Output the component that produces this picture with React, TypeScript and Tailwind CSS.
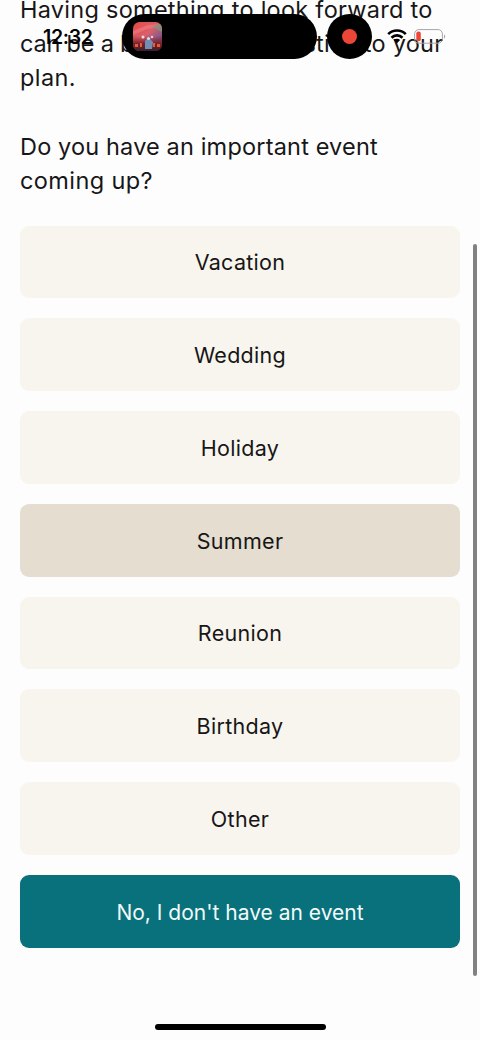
const events = ['Vacation', 'Wedding', 'Holiday', 'Summer', 'Reunion', 'Birthday', 'Other'];

function StatusBar() {
  return (
    <header className="absolute inset-x-0 top-0 flex h-[73px] items-center text-black">
      <div className="ml-[43px] w-[79px] font-['Inter',sans-serif] text-[19.5px] font-semibold leading-6 tracking-[-0.3px]">
        12:32
      </div>
      <div className="flex h-[45px] w-[195px] items-center rounded-full bg-black pl-[11px]">
        <svg className="h-[29px] w-[29px]" viewBox="0 0 29 29">
          <defs>
            <linearGradient id="sky" x1="0" y1="0" x2="1" y2="1">
              <stop offset="0" stopColor="#e5493f" />
              <stop offset=".45" stopColor="#d9606d" />
              <stop offset=".7" stopColor="#8c5a86" />
              <stop offset="1" stopColor="#552844" />
            </linearGradient>
            <linearGradient id="floor" x1="0" y1="0" x2="0" y2="1">
              <stop offset="0" stopColor="#7b2333" stopOpacity="0" />
              <stop offset=".5" stopColor="#81202a" />
              <stop offset="1" stopColor="#38202d" />
            </linearGradient>
            <filter id="glow"><feGaussianBlur stdDeviation=".7" /></filter>
            <clipPath id="cover"><rect width="29" height="29" rx="6.5" /></clipPath>
          </defs>
          <g clipPath="url(#cover)">
            <rect width="29" height="29" fill="url(#sky)" />
            <rect y="14" width="29" height="15" fill="url(#floor)" />
            <g filter="url(#glow)">
              <path d="M0 9 15 3 29 2v3L14 7 0 13Z" fill="#f1777c" opacity=".7" />
              <path d="m19 5 10-4v9Z" fill="#82927c" opacity=".8" />
              <circle cx="10" cy="15" r="1.5" fill="#ffdce2" />
              <circle cx="19" cy="15" r="1.3" fill="#efc5e1" />
              <path d="M2 22h3v3H2zm5-1h2v4H7zm13 0h2v4h-2zm4 1h3v3h-3z" fill="#e85c32" />
              <path d="m12 19 2-2h3l3 3-1 7h-7Z" fill="#718fb5" />
              <circle cx="15.5" cy="16.5" r="1.6" fill="#d8d8e6" />
            </g>
          </g>
        </svg>
      </div>
      <div className="ml-[9.5px] flex h-[45px] w-[45px] items-center justify-center rounded-full bg-black">
        <span className="h-[15px] w-[15px] rounded-full bg-[#ec4637]" />
      </div>
      <svg className="ml-[15px] h-[15px] w-5" viewBox="0 0 20 15" fill="none" stroke="currentColor" strokeWidth="2.7">
        <path d="M1.2 5.1C6.1.3 13.9.3 18.8 5.1M4.5 8.7c3.1-3 7.9-3 11 0" />
        <path d="m6.9 11.1 3.1 3.1 3.1-3.1a4.4 4.4 0 0 0-6.2 0Z" fill="currentColor" stroke="none" />
      </svg>
      <svg className="ml-[7px] h-[15px] w-8" viewBox="0 0 32 15">
        <rect x=".6" y=".6" width="27.8" height="13.6" rx="4.2" fill="none" stroke="#a5a4a6" strokeWidth="1" />
        <rect x="2.3" y="2.5" width="4.5" height="9.7" rx="2" fill="#ef4438" />
        <path d="M30 5.2c1.6.7 1.6 3.7 0 4.5Z" fill="#a5a4a6" />
      </svg>
    </header>
  );
}

export default function App() {
  return (
    <div className="relative flex h-[1040px] w-[480px] flex-col overflow-hidden bg-[#fefdfe] font-['Inter','Liberation_Sans',sans-serif] text-[#171617]">
      <main className="-mt-[7px] flex flex-col px-5">
        <div className="whitespace-nowrap text-[23.5px] font-normal leading-[34.2px] tracking-[0.2px]">
          <p className="tracking-[0.27px]">Having something to look forward to</p>
          <p>
            <span className="tracking-[-0.2px]">can be a big </span>
            <span className="tracking-[0.27px]">motivator to stick to your</span>
          </p>
          <p className="tracking-[0.4px]">plan.</p>
          <p className="mt-[34.2px] tracking-[0.2px] [word-spacing:-0.2px]">Do you have an important event</p>
          <p className="tracking-[0.4px]">coming up?</p>
        </div>
        <div className="mt-[27.3px] flex flex-col gap-5 text-[21.5px] font-normal">
          {events.map((event) => (
            <button
              key={event}
              className={`h-[72.8px] rounded-[9px] pt-px tracking-[0.3px] ${event === 'Summer' ? 'bg-[#e4ddd0]' : 'bg-[#f8f5ee]'}`}
            >
              {event}
            </button>
          ))}
          <button className="h-[72.8px] rounded-[9px] bg-[#08717b] pt-0.5 text-[21px] text-[#f2fafa]">
            No, I don't have an event
          </button>
        </div>
      </main>
      <StatusBar />
      <div className="absolute right-[3.5px] top-[244px] h-[732px] w-[3.5px] rounded-full bg-[#818082]" />
      <div className="absolute bottom-[10px] left-[155px] h-[6px] w-[171px] rounded-full bg-black" />
    </div>
  );
}
